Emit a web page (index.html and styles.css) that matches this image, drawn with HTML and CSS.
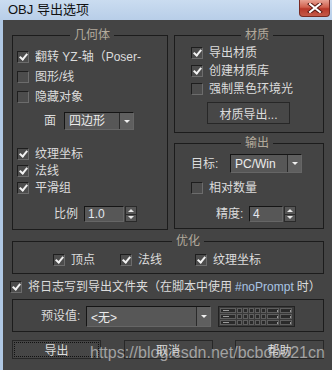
FILE: index.html
```html
<!DOCTYPE html>
<html lang="zh">
<head>
    <meta charset="UTF-8">
    <title>OBJ 导出选项</title>
    <link rel="stylesheet" href="styles.css">
</head>
<body>
<div class="window">
    <div class="titlebar">
        <span class="title">OBJ 导出选项</span>
        <span class="close">
            <svg width="16" height="10" viewBox="0 0 16 10">
                <path d="M3 1 L13 9 M13 1 L3 9" stroke="#5a1a14" stroke-width="4" stroke-linecap="square"/>
                <path d="M3 1 L13 9 M13 1 L3 9" stroke="#fff" stroke-width="2" stroke-linecap="square"/>
            </svg>
        </span>
    </div>

    <div class="content">
        <div class="top">
            <!-- 几何体 -->
            <fieldset class="group geo">
                <legend>几何体</legend>
                <label class="row r20"><span class="box on"></span>翻转 YZ-轴（Poser-</label>
                <label class="row r20"><span class="box"></span>图形/线</label>
                <label class="row r20"><span class="box"></span>隐藏对象</label>
                <div class="row face">
                    <span class="lbl">面</span>
                    <div class="select w70"><span class="value">四边形</span><span class="arrow"></span></div>
                </div>
                <div class="tex">
                    <label class="row r17"><span class="box on"></span>纹理坐标</label>
                    <label class="row r17"><span class="box on"></span>法线</label>
                    <label class="row r17"><span class="box on"></span>平滑组</label>
                </div>
                <div class="row scale">
                    <span class="lbl">比例</span>
                    <div class="spinner">
                        <span class="num w40">1.0</span>
                        <span class="spin"><span class="up"></span><span class="down"></span></span>
                    </div>
                </div>
            </fieldset>

            <div class="rightcol">
                <!-- 材质 -->
                <fieldset class="group mat">
                    <legend>材质</legend>
                    <label class="row r18"><span class="box on"></span>导出材质</label>
                    <label class="row r18"><span class="box on"></span>创建材质库</label>
                    <label class="row r18"><span class="box"></span>强制黑色环境光</label>
                    <button class="btn matbtn">材质导出...</button>
                </fieldset>

                <!-- 输出 -->
                <fieldset class="group out">
                    <legend>输出</legend>
                    <div class="row target">
                        <span class="lbl">目标:</span>
                        <div class="select w72"><span class="value cream">PC/Win</span><span class="arrow"></span></div>
                    </div>
                    <label class="row r18 rel"><span class="box"></span>相对数量</label>
                    <div class="row prec">
                        <span class="lbl">精度:</span>
                        <div class="spinner">
                            <span class="num w34">4</span>
                            <span class="spin"><span class="up"></span><span class="down"></span></span>
                        </div>
                    </div>
                </fieldset>
            </div>
        </div>

        <!-- 优化 -->
        <fieldset class="group opt">
            <legend>优化</legend>
            <div class="row r18 optrow">
                <label class="item i1"><span class="box on"></span>顶点</label>
                <label class="item i2"><span class="box on"></span>法线</label>
                <label class="item"><span class="box on"></span>纹理坐标</label>
            </div>
        </fieldset>

        <label class="row r18 log"><span class="box on"></span>将日志写到导出文件夹（在脚本中使用 <span class="code">#noPrompt</span> 时）</label>

        <div class="preset">
            <span class="lbl">预设值:</span>
            <div class="select w125 h21"><span class="value">&lt;无&gt;</span><span class="arrow"></span></div>
            <svg class="grid" width="77" height="21" viewBox="0 0 77 21">
                <rect x="0.5" y="0.5" width="76" height="20" fill="#3a3a3a" stroke="#222"/>
                <g fill="#2a2a2a" stroke="#5e5e5e" stroke-width="1">
                    <rect x="2.5" y="2.5" width="15" height="4"/>
                    <rect x="2.5" y="8.5" width="15" height="4"/>
                    <rect x="2.5" y="14.5" width="15" height="4"/>
                    <rect x="19.5" y="2.5" width="4" height="4"/><rect x="25.5" y="2.5" width="4" height="4"/><rect x="31.5" y="2.5" width="4" height="4"/><rect x="37.5" y="2.5" width="4" height="4"/><rect x="43.5" y="2.5" width="4" height="4"/>
                    <rect x="19.5" y="8.5" width="4" height="4"/><rect x="25.5" y="8.5" width="4" height="4"/><rect x="31.5" y="8.5" width="4" height="4"/><rect x="37.5" y="8.5" width="4" height="4"/><rect x="43.5" y="8.5" width="4" height="4"/>
                    <rect x="19.5" y="14.5" width="4" height="4"/><rect x="25.5" y="14.5" width="4" height="4"/><rect x="31.5" y="14.5" width="4" height="4"/><rect x="37.5" y="14.5" width="4" height="4"/><rect x="43.5" y="14.5" width="4" height="4"/>
                    <rect x="49.5" y="2.5" width="11" height="4"/><rect x="62.5" y="2.5" width="11" height="4"/>
                    <rect x="49.5" y="8.5" width="11" height="4"/><rect x="62.5" y="8.5" width="11" height="4"/>
                    <rect x="49.5" y="14.5" width="11" height="4"/><rect x="62.5" y="14.5" width="11" height="4"/>
                </g>
                <g fill="#9a9a9a">
                    <rect x="5" y="4" width="6" height="1"/><rect x="5" y="10" width="6" height="1"/><rect x="5" y="16" width="6" height="1"/>
                    <rect x="59" y="4" width="1" height="2"/><rect x="72" y="4" width="1" height="2"/>
                    <rect x="59" y="10" width="1" height="2"/><rect x="72" y="10" width="1" height="2"/>
                    <rect x="59" y="16" width="1" height="2"/><rect x="72" y="16" width="1" height="2"/>
                </g>
            </svg>
        </div>

        <div class="buttons">
            <button class="btn act focus"><span>导出</span></button>
            <button class="btn act">取消</button>
            <button class="btn act">帮助</button>
        </div>
    </div>

    <div class="watermark">https://blog.csdn.net/bcbobo21cn</div>
</div>
</body>
</html>
```

FILE: styles.css
```css
body {
    margin: 0;
    background: #444;
    font-family: "Liberation Sans", "Noto Sans CJK SC", sans-serif;
    font-size: 12px;
    color: #dcdcdc;
}

.window {
    position: relative;
    width: 332px;
    height: 370px;
    overflow: hidden;
    background: #444;
}

.titlebar {
    height: 20px;
    display: flex;
    align-items: center;
    justify-content: space-between;
    background: linear-gradient(#cadcf0, #b8cee8);
}

.title {
    margin-left: 8px;
    color: #111;
    font-size: 13px;
    line-height: 14px;
}

.close {
    align-self: flex-start;
    width: 31px;
    height: 17px;
    margin-right: 2px;
    box-sizing: border-box;
    display: flex;
    align-items: center;
    justify-content: center;
    border: 1px solid #7a2a22;
    border-top: 0;
    border-radius: 0 0 4px 4px;
    background: linear-gradient(#e8a293, #d0604e 45%, #b8382a 55%, #c45a48);
}

.content {
    height: 350px;
    border-left: 3px solid #b0c8e4;
    padding: 8px 8px 0 9px;
    box-sizing: border-box;
}

.top {
    display: grid;
    grid-template-columns: 156px 150px;
    column-gap: 6px;
    align-items: start;
}

.group {
    margin: 0;
    padding: 0;
    border: 1px solid #1c1c1c;
    min-width: 0;
}

.group legend {
    margin: 0 auto;
    padding: 0 4px;
    line-height: 14px;
    font-size: 12px;
    color: #b3aa9c;
}

.row {
    display: flex;
    align-items: center;
    gap: 6px;
    line-height: 14px;
    white-space: nowrap;
}

.r20 { height: 20px; }
.r18 { height: 18px; }
.r17 { height: 17px; }

.box {
    width: 12px;
    height: 12px;
    box-sizing: border-box;
    flex: none;
    display: flex;
    align-items: center;
    justify-content: center;
    background: #4c4c4c;
    border: 1px solid;
    border-color: #1e1e1e #6c6c6c #6c6c6c #1e1e1e;
}

.box.on::after {
    content: "";
    width: 3px;
    height: 6px;
    margin-top: -2px;
    border: solid #f2f2f2;
    border-width: 0 2px 2px 0;
    transform: rotate(40deg);
}

/* geometry */
.geo {
    padding: 5px 0 7px 4px;
}

.face {
    height: 18px;
    margin-top: 5px;
    padding-left: 27px;
    gap: 8px;
}

.tex {
    margin-top: 15px;
}

.scale {
    height: 16px;
    margin-top: 10px;
    padding-left: 37px;
}

/* dropdowns */
.select {
    display: flex;
    height: 18px;
    box-sizing: border-box;
    background: #575757;
    border: 1px solid;
    border-color: #151515 #666 #666 #151515;
}

.select .value {
    flex: 1;
    padding-left: 4px;
    display: flex;
    align-items: center;
    color: #ececec;
}

.select .arrow {
    width: 13px;
    display: flex;
    align-items: center;
    justify-content: center;
    background: #5f5f5f;
    border-left: 1px solid #2a2a2a;
}

.select .arrow::after {
    content: "";
    border-left: 3px solid transparent;
    border-right: 3px solid transparent;
    border-top: 3px solid #f0f0f0;
}

.w70 { width: 70px; }
.w72 { width: 72px; height: 19px; }
.w125 { width: 125px; }
.h21 { height: 21px; }

.cream { color: #ece3c6; }

/* spinners */
.spinner {
    display: flex;
    gap: 1px;
    height: 16px;
}

.num {
    box-sizing: border-box;
    padding-left: 3px;
    display: flex;
    align-items: center;
    background: #575757;
    border: 1px solid;
    border-color: #151515 #666 #666 #151515;
    color: #e4e8f0;
}

.w40 { width: 40px; }
.w34 { width: 34px; }

.spin {
    width: 12px;
    display: flex;
    flex-direction: column;
}

.spin span {
    flex: 1;
    display: flex;
    align-items: center;
    justify-content: center;
    background: #565656;
    border: 1px solid #2a2a2a;
}

.spin span + span {
    border-top: 0;
}

.spin .up::after {
    content: "";
    border-left: 3px solid transparent;
    border-right: 3px solid transparent;
    border-bottom: 3px solid #e8e8e8;
}

.spin .down::after {
    content: "";
    border-left: 3px solid transparent;
    border-right: 3px solid transparent;
    border-top: 3px solid #e8e8e8;
}

/* material */
.rightcol {
    display: flex;
    flex-direction: column;
}

.mat {
    padding: 2px 0 8px 16px;
}

.btn {
    font: inherit;
    color: #dcdcdc;
    background: #474747;
    border: 1px solid #272727;
    padding: 0;
    display: flex;
    align-items: center;
    justify-content: center;
}

.matbtn {
    width: 83px;
    height: 22px;
    margin-top: 4px;
    margin-left: 16px;
}

/* output */
.out {
    margin-top: 3px;
    padding: 4px 0 6px 16px;
}

.target {
    height: 19px;
    gap: 0;
}

.target .lbl {
    width: 39px;
}

.rel {
    margin-top: 6px;
}

.prec {
    height: 16px;
    margin-top: 9px;
    padding-left: 25px;
    gap: 0;
}

.prec .lbl {
    width: 33px;
}

/* optimize */
.opt {
    margin-top: 4px;
    padding: 3px 0 4px 40px;
}

.optrow {
    gap: 0;
}

.item {
    display: flex;
    align-items: center;
    gap: 6px;
}

.i1 { width: 67px; }
.i2 { width: 75px; }

.log {
    margin-top: 4px;
    margin-left: -2px;
}

.code {
    color: #a9c4e4;
    margin: 0 -3px;
}

/* preset */
.preset {
    margin-top: 3px;
    height: 33px;
    box-sizing: border-box;
    border: 1px solid #1c1c1c;
    padding: 6px 0 0 28px;
    display: flex;
    align-items: flex-start;
}

.preset .lbl {
    width: 45px;
    line-height: 21px;
}

.grid {
    margin-left: 7px;
    display: block;
}

.buttons {
    margin-top: 8px;
    width: 312px;
    display: flex;
    justify-content: space-between;
}

.act {
    width: 89px;
    height: 19px;
    background: #464646;
}

.focus span {
    display: flex;
    align-items: center;
    justify-content: center;
    width: 83px;
    height: 13px;
    border: 1px dotted #111;
}

.watermark {
    position: absolute;
    left: 90px;
    top: 345px;
    font-family: "Liberation Sans", sans-serif;
    font-size: 16px;
    line-height: 16px;
    color: rgba(205, 205, 205, 0.7);
    white-space: nowrap;
}
```
